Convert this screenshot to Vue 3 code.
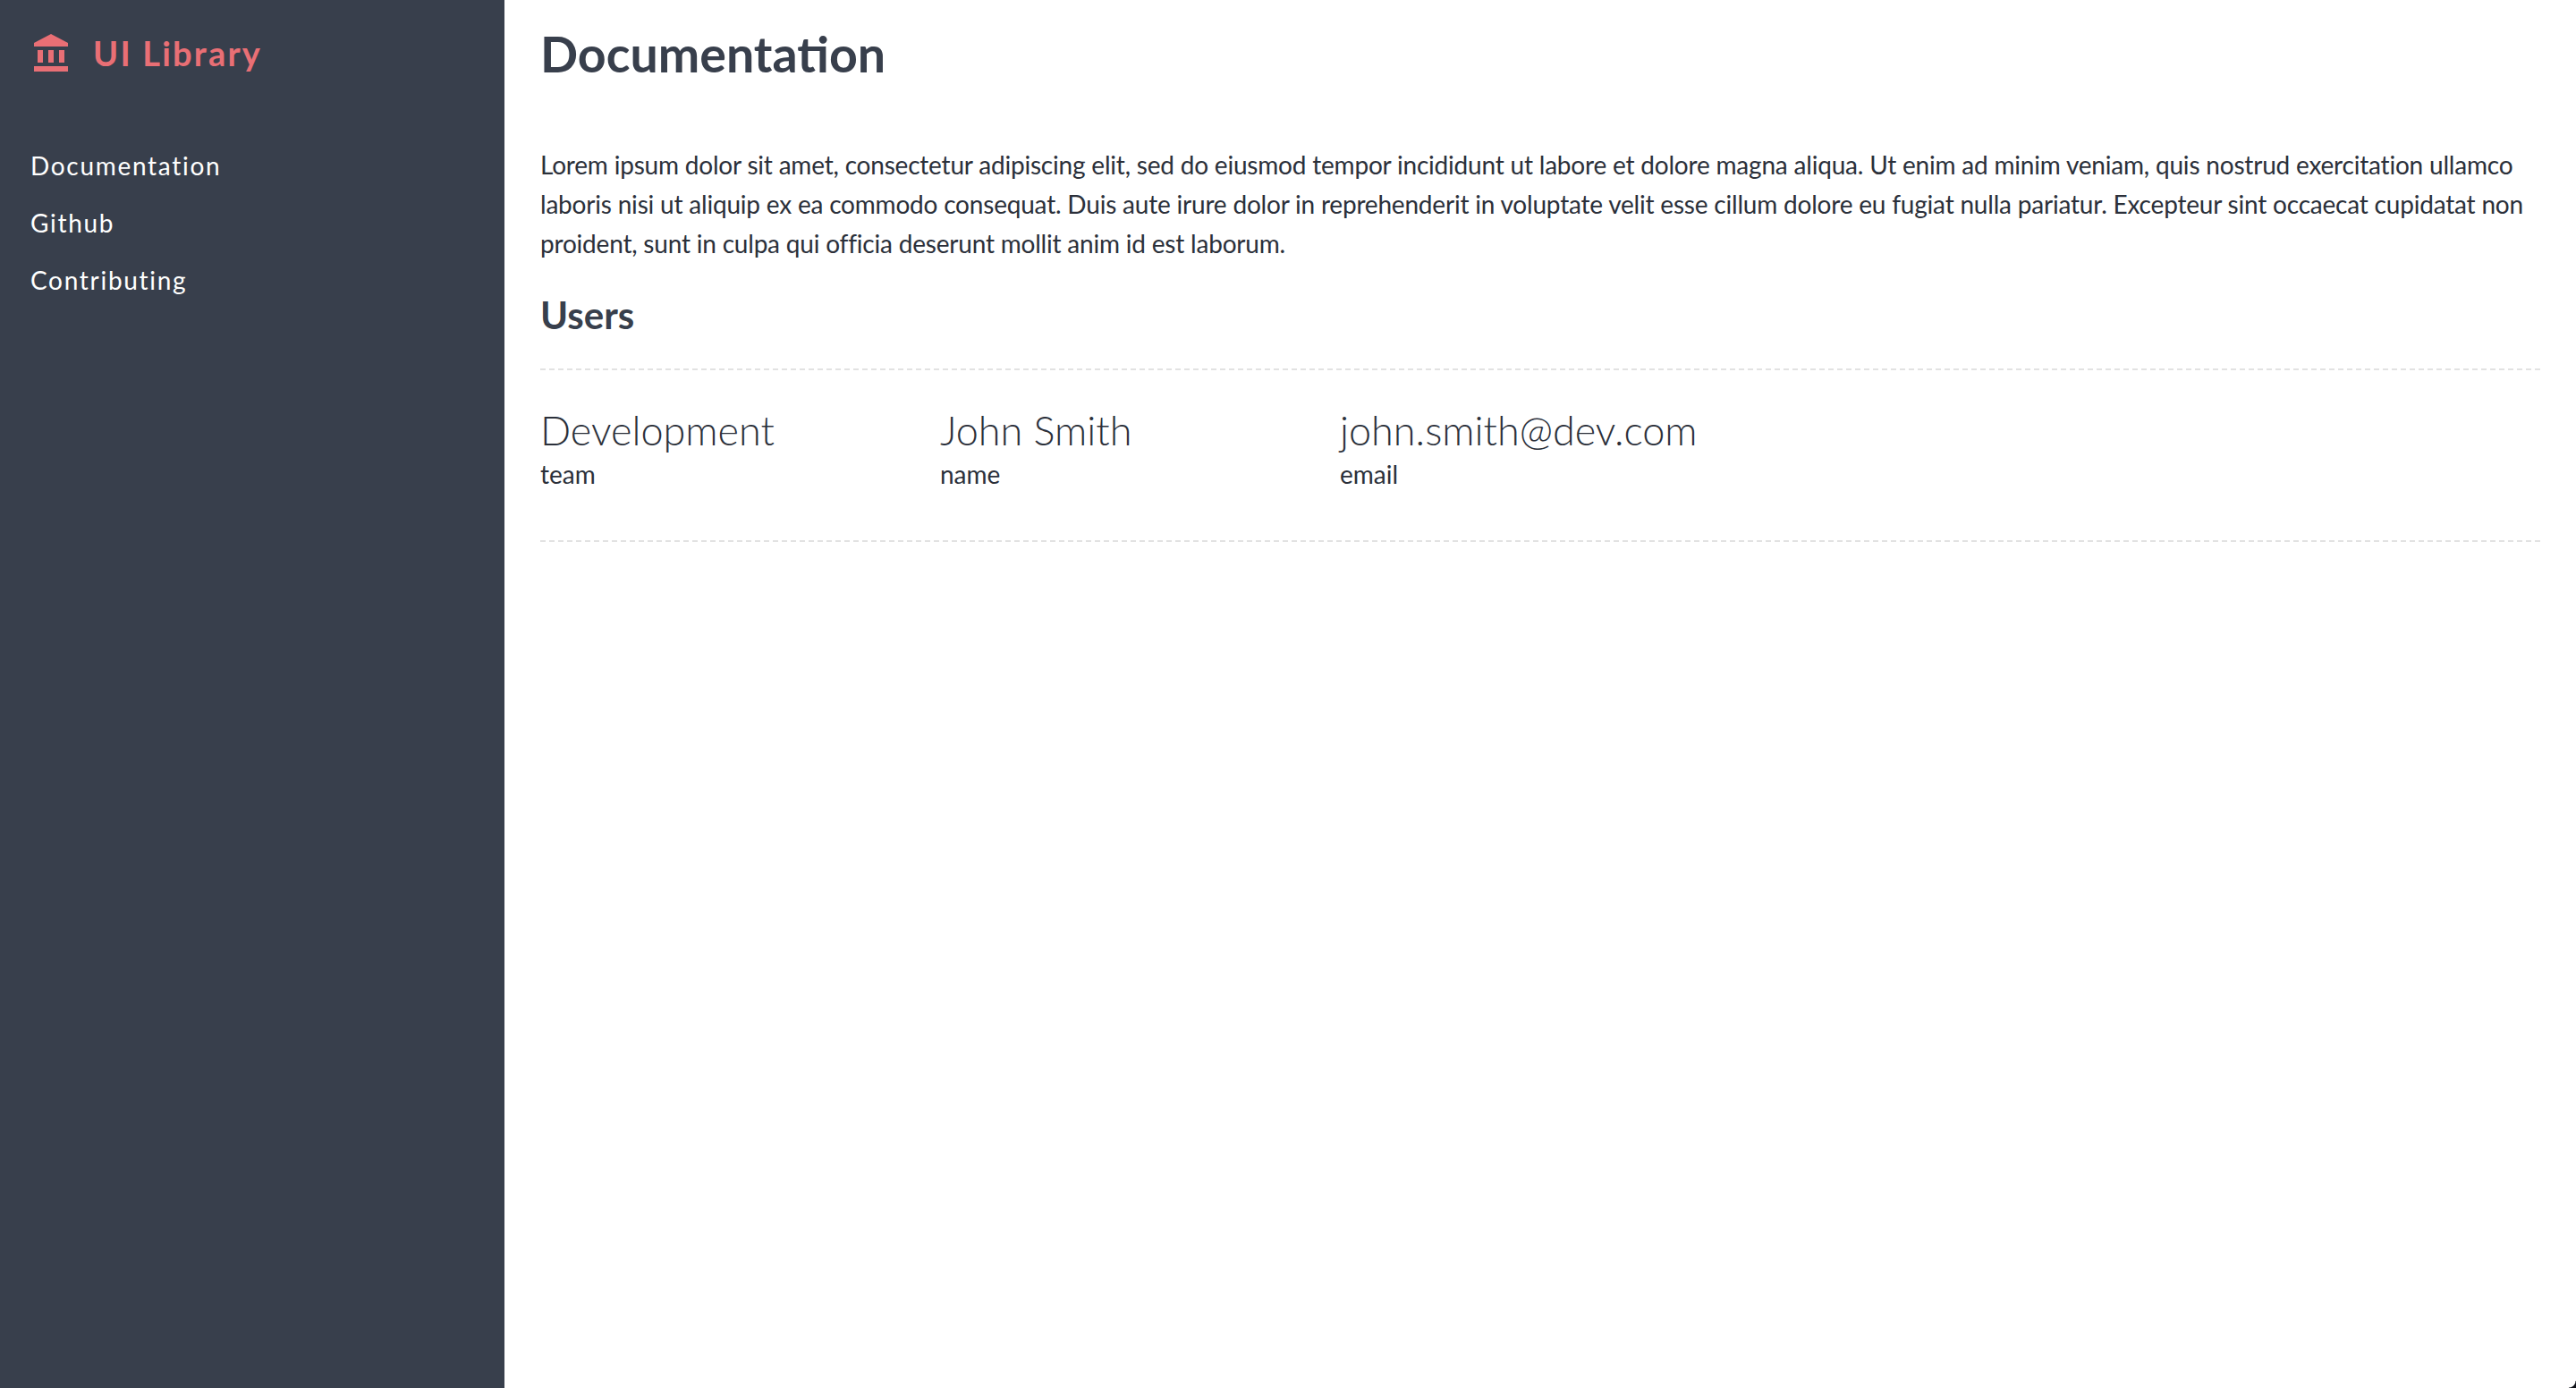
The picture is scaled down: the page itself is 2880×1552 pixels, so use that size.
<template>
  <div class="layout">
    <aside class="sidebar">
      <div class="brand">
        <svg class="brand-icon" viewBox="0 0 38 42" fill="currentColor">
          <path d="M19 0 38 10V14H0V10Z" />
          <path d="M4 18h6v14H4zM16 18h6v14h-6zM28 18h6v14h-6z" />
          <path d="M0 36h38v6H0z" />
        </svg>
        <span>UI Library</span>
      </div>
      <nav class="nav">
        <a v-for="item in navItems" :key="item" class="nav-item">{{ item }}</a>
      </nav>
    </aside>

    <main class="content">
      <h1>Documentation</h1>
      <p class="intro">{{ intro }}</p>
      <h2>Users</h2>
      <div class="stats">
        <div v-for="stat in stats" :key="stat.label" class="stat">
          <div class="stat-value">{{ stat.value }}</div>
          <div class="stat-label">{{ stat.label }}</div>
        </div>
      </div>
    </main>
    <div class="screen-corner"></div>
  </div>
</template>

<script setup>
const navItems = ['Documentation', 'Github', 'Contributing']

const intro =
  'Lorem ipsum dolor sit amet, consectetur adipiscing elit, sed do eiusmod tempor incididunt ut labore et dolore magna aliqua. Ut enim ad minim veniam, quis nostrud exercitation ullamco laboris nisi ut aliquip ex ea commodo consequat. Duis aute irure dolor in reprehenderit in voluptate velit esse cillum dolore eu fugiat nulla pariatur. Excepteur sint occaecat cupidatat non proident, sunt in culpa qui officia deserunt mollit anim id est laborum.'

const stats = [
  { value: 'Development', label: 'team' },
  { value: 'John Smith', label: 'name' },
  { value: 'john.smith@dev.com', label: 'email' },
]
</script>

<style>
html,
body {
  margin: 0;
  background: #fff;
}
</style>

<style scoped>
.layout {
  position: relative;
  display: flex;
  height: 1552px;
  overflow: hidden;
  font-family: Lato, "Open Sans", sans-serif;
  color: #383f4c;
}

.sidebar {
  width: 564px;
  flex-shrink: 0;
  box-sizing: border-box;
  padding: 35px 34px;
  background: #383f4c;
}

.brand {
  display: flex;
  align-items: center;
  gap: 28px;
  height: 48px;
  padding-left: 4px;
  font-size: 38px;
  font-weight: 700;
  letter-spacing: 2.200px;
  color: #e96f75;
}

.brand-icon {
  width: 38px;
  height: 42px;
}

.nav {
  display: flex;
  flex-direction: column;
  gap: 24px;
  margin-top: 82px;
}

.nav-item {
  font-size: 28px;
  line-height: 40px;
  letter-spacing: 1.700px;
  color: #fff;
}

.content {
  flex: 1;
  padding: 0 40px;
}

h1 {
  margin: 0;
  padding-top: 29px;
  font-size: 55.500px;
  line-height: 62px;
  font-weight: 700;
}

.intro {
  margin: 71px 0 0;
  font-size: 28px;
  line-height: 44px;
  letter-spacing: -0.200px;
  color: #2b303a;
}

h2 {
  margin: 32px 0 0;
  font-size: 42px;
  line-height: 52px;
  font-weight: 700;
}

.stats {
  display: flex;
  margin-top: 34px;
  padding: 39px 0 56px;
  border-top: 2px dashed #e2e2e2;
  border-bottom: 2px dashed #e2e2e2;
}

.stat {
  width: 447px;
}

.stat-value {
  font-size: 45px;
  line-height: 56px;
  font-weight: 300;
  color: #2b303a;
}

.stat-label {
  margin-top: 3px;
  font-size: 28px;
  line-height: 36px;
  color: #2b303a;
}

.screen-corner {
  position: absolute;
  right: 0;
  bottom: 0;
  width: 8px;
  height: 8px;
  background: radial-gradient(circle at 0 0, transparent 7px, #10131a 8px);
}
</style>
